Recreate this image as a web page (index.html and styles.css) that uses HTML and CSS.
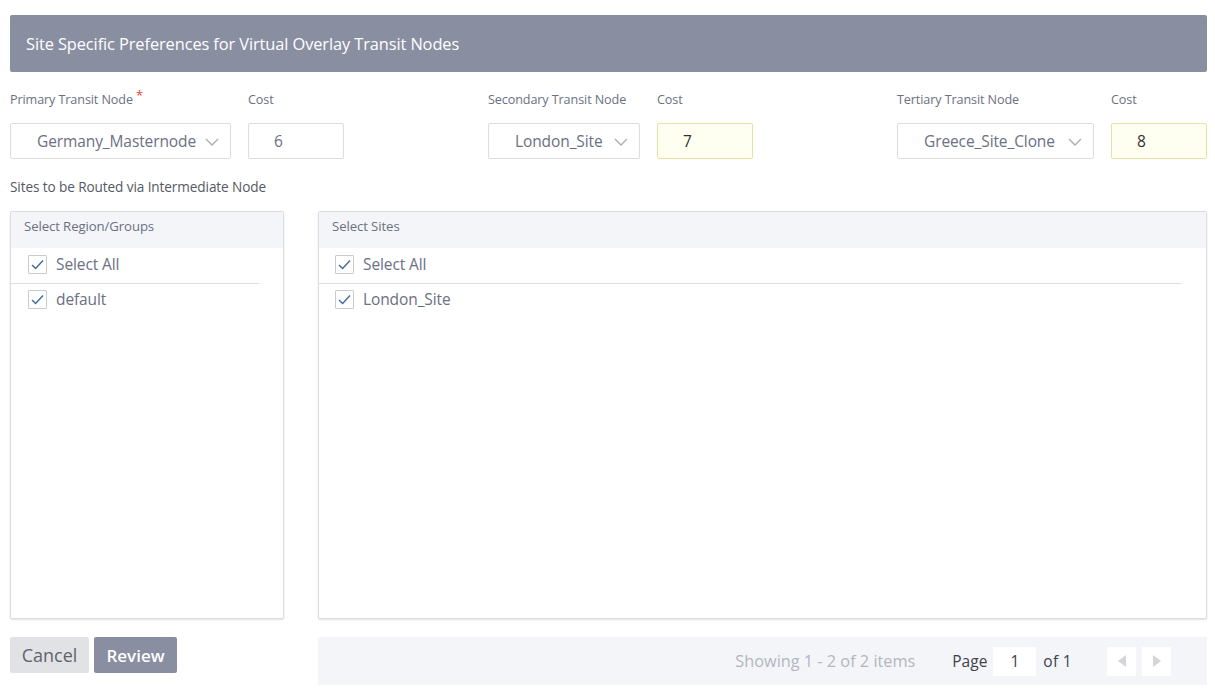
FILE: index.html
```html
<!DOCTYPE html>
<html>
<head>
<meta charset="utf-8">
<link rel="stylesheet" href="styles.css">
</head>
<body>
<div class="page">
  <div class="title-bar">Site Specific Preferences for Virtual Overlay Transit Nodes</div>

  <div class="nodes">
    <div class="node">
      <div class="field w-primary">
        <div class="label">Primary Transit Node<span class="req">*</span></div>
        <div class="select"><span>Germany_Masternode</span><svg class="chev" width="14" height="8" viewBox="0 0 14 8"><path d="M1 1l6 6 6-6" fill="none" stroke="#a9adb8" stroke-width="1.4"/></svg></div>
      </div>
      <div class="field w-cost">
        <div class="label">Cost</div>
        <div class="cost">6</div>
      </div>
    </div>
    <div class="node">
      <div class="field w-secondary">
        <div class="label">Secondary Transit Node</div>
        <div class="select"><span>London_Site</span><svg class="chev" width="14" height="8" viewBox="0 0 14 8"><path d="M1 1l6 6 6-6" fill="none" stroke="#a9adb8" stroke-width="1.4"/></svg></div>
      </div>
      <div class="field w-cost">
        <div class="label">Cost</div>
        <div class="cost warn">7</div>
      </div>
    </div>
    <div class="node">
      <div class="field w-tertiary">
        <div class="label">Tertiary Transit Node</div>
        <div class="select"><span>Greece_Site_Clone</span><svg class="chev" width="14" height="8" viewBox="0 0 14 8"><path d="M1 1l6 6 6-6" fill="none" stroke="#a9adb8" stroke-width="1.4"/></svg></div>
      </div>
      <div class="field w-cost">
        <div class="label">Cost</div>
        <div class="cost warn">8</div>
      </div>
    </div>
  </div>

  <div class="section-label">Sites to be Routed via Intermediate Node</div>

  <div class="panels">
    <div class="panel left">
      <div class="panel-head">Select Region/Groups</div>
      <div class="row first narrow-left"><span class="cb"><svg width="13" height="11" viewBox="0 0 13 11"><path d="M1 6l3.6 3.4L12 1.5" fill="none" stroke="#3d6a9e" stroke-width="1.4"/></svg></span>Select All</div>
      <div class="row"><span class="cb"><svg width="13" height="11" viewBox="0 0 13 11"><path d="M1 6l3.6 3.4L12 1.5" fill="none" stroke="#3d6a9e" stroke-width="1.4"/></svg></span>default</div>
    </div>
    <div class="panel right">
      <div class="panel-head">Select Sites</div>
      <div class="row first narrow-right"><span class="cb"><svg width="13" height="11" viewBox="0 0 13 11"><path d="M1 6l3.6 3.4L12 1.5" fill="none" stroke="#3d6a9e" stroke-width="1.4"/></svg></span>Select All</div>
      <div class="row"><span class="cb"><svg width="13" height="11" viewBox="0 0 13 11"><path d="M1 6l3.6 3.4L12 1.5" fill="none" stroke="#3d6a9e" stroke-width="1.4"/></svg></span>London_Site</div>
    </div>
  </div>

  <div class="footer">
    <div class="buttons">
      <button class="btn cancel">Cancel</button>
      <button class="btn review">Review</button>
    </div>
    <div class="pager">
      <span class="showing">Showing 1 - 2 of 2 items</span>
      <span class="page-label">Page</span>
      <span class="page-input">1</span>
      <span class="of">of 1</span>
      <span class="nav"><svg width="10" height="14" viewBox="0 0 10 14"><path d="M9 1v12L1 7z" fill="#d3d5da"/></svg></span>
      <span class="nav"><svg width="10" height="14" viewBox="0 0 10 14"><path d="M1 1v12l8-6z" fill="#d3d5da"/></svg></span>
    </div>
  </div>
</div>
</body>
</html>
```

FILE: styles.css
```css
* { box-sizing: border-box; }
html, body { margin: 0; padding: 0; background: #fff; }
body {
  font-family: "Open Sans", "Noto Sans", sans-serif;
  color: #6b7082;
}
.page {
  width: 1215px;
  padding: 15px 8px 0 10px;
}
.title-bar {
  height: 57px;
  background: #898ea1;
  border-radius: 2px;
  color: #fff;
  font-size: 16.4px;
  line-height: 57px;
  padding-left: 16px;
  letter-spacing: -0.1px;
}
.nodes {
  display: flex;
  justify-content: space-between;
  width: 1197px;
  margin-top: 19px;
}
.node {
  display: flex;
  gap: 17px;
  flex-shrink: 0;
}
.field { display: flex; flex-direction: column; flex-shrink: 0; }
.w-primary { width: 221px; }
.w-secondary { width: 152px; }
.w-tertiary { width: 197px; }
.w-cost { width: 96px; }
.label {
  font-size: 12.6px;
  line-height: 17px;
  height: 17px;
  color: #6b7082;
  letter-spacing: -0.1px;
  white-space: nowrap;
}
.req { color: #e8452f; margin-left: 3px; position: relative; top: -4px; font-size: 13px; }
.select {
  margin-top: 15px;
  height: 36px;
  border: 1px solid #dcdde2;
  border-radius: 2px;
  display: flex;
  align-items: center;
  justify-content: space-between;
  padding: 0 11px 0 26px;
  font-size: 15.5px;
  color: #6b7082;
  letter-spacing: -0.1px;
}
.chev { margin-top: 2px; }
.cost {
  margin-top: 15px;
  width: 96px;
  height: 36px;
  border: 1px solid #dcdde2;
  border-radius: 2px;
  padding-left: 25px;
  font-size: 15.5px;
  line-height: 34px;
  color: #6b7082;
}
.cost.warn {
  background: #fefff0;
  border-color: #e6e2a6;
  color: #333;
}
.section-label {
  margin-top: 19px;
  font-size: 13.6px;
  line-height: 18px;
  color: #555963;
  letter-spacing: -0.1px;
}
.panels {
  display: flex;
  gap: 34px;
  margin-top: 15px;
}
.panel {
  height: 408px;
  border: 1px solid #dcdde2;
  border-radius: 2px;
  box-shadow: 0 1px 2px rgba(0,0,0,0.12);
  background: #fff;
}
.panel.left { width: 274px; }
.panel.right { width: 889px; }
.panel-head {
  height: 36px;
  background: #f4f5f9;
  font-size: 13.2px;
  line-height: 29px;
  padding-left: 13px;
  color: #6b7082;
  letter-spacing: -0.1px;
}
.row {
  display: flex;
  align-items: center;
  height: 30px;
  padding-left: 17px;
  font-size: 15.5px;
  color: #6b7082;
  letter-spacing: -0.1px;
}
.panel.right .row { padding-left: 16px; }
.row.first { height: 36px; padding-bottom: 3px; border-bottom: 1px solid #dcdde2; }
.narrow-left { width: 248px; }
.narrow-right { width: 862px; }
.cb {
  width: 19px;
  height: 19px;
  border: 1px solid #c8cbd3;
  border-radius: 1px;
  display: inline-flex;
  align-items: center;
  justify-content: center;
  margin-right: 9px;
  background: #fff;
}
.footer {
  display: flex;
  gap: 131px;
  margin-top: 18px;
}
.buttons { display: flex; gap: 5px; width: 177px; align-items: flex-start; }
.btn {
  height: 36px;
  border: none;
  border-radius: 2px;
  font-family: "Open Sans", "Noto Sans", sans-serif;
  font-size: 18px;
  padding: 0;
}
.cancel { width: 79px; background: #e1e2e5; color: #5f626b; }
.review { width: 83px; background: #898ea1; color: #fff; font-weight: 600; font-size: 17px; }
.pager {
  width: 889px;
  height: 48px;
  background: #f4f5f9;
  display: flex;
  align-items: center;
  justify-content: flex-end;
  padding-right: 36px;
  font-size: 15.5px;
}
.showing { color: #b3b6be; margin-right: 37px; font-size: 16.3px; }
.page-label { color: #3e424a; margin-right: 6px; }
.page-input {
  width: 43px;
  height: 29px;
  background: #fff;
  color: #3e424a;
  text-align: center;
  line-height: 29px;
}
.of { color: #3e424a; margin-left: 7px; margin-right: 29px; letter-spacing: 0.3px; }
.nav {
  width: 29px;
  height: 29px;
  background: #fff;
  display: inline-flex;
  align-items: center;
  justify-content: center;
  margin-left: 6px;
}
```
